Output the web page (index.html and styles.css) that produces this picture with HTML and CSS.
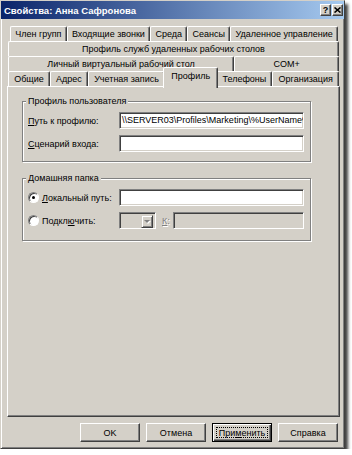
FILE: index.html
```html
<!DOCTYPE html>
<html lang="ru">
<head>
    <meta charset="UTF-8">
    <title>Свойства: Анна Сафронова</title>
    <link rel="stylesheet" href="styles.css">
</head>
<body>
    <div class="window">
        <div class="titlebar">
            <span class="title">Свойства: Анна Сафронова</span>
            <div class="caption-btns">
                <span class="cap-btn help">?</span>
                <span class="cap-btn">
                    <svg width="7" height="6" viewBox="0 0 7 6">
                        <path d="M0.5 0.5 L6.5 5.5 M6.5 0.5 L0.5 5.5" stroke="#000" stroke-width="1.6" fill="none"/>
                    </svg>
                </span>
            </div>
        </div>

        <div class="client">
            <!-- Tabs -->
            <div class="tabs">
                <div class="tab-row first">
                    <div class="tab">Член групп</div>
                    <div class="tab">Входящие звонки</div>
                    <div class="tab">Среда</div>
                    <div class="tab">Сеансы</div>
                    <div class="tab">Удаленное управление</div>
                </div>
                <div class="tab-row">
                    <div class="tab">Профиль служб удаленных рабочих столов</div>
                </div>
                <div class="tab-row">
                    <div class="tab">Личный виртуальный рабочий стол</div>
                    <div class="tab">COM+</div>
                </div>
                <div class="tab-row">
                    <div class="tab">Общие</div>
                    <div class="tab">Адрес</div>
                    <div class="tab">Учетная запись</div>
                    <div class="tab active">Профиль</div>
                    <div class="tab">Телефоны</div>
                    <div class="tab">Организация</div>
                </div>
            </div>

            <div class="panel">
                <fieldset class="group">
                    <legend>Профиль пользователя</legend>
                    <div class="rows">
                        <div class="row">
                            <span class="label"><u>П</u>уть к профилю:</span>
                            <div class="field">\\SERVER03\Profiles\Marketing\%UserName%</div>
                        </div>
                        <div class="row">
                            <span class="label"><u>С</u>ценарий входа:</span>
                            <div class="field"></div>
                        </div>
                    </div>
                </fieldset>

                <fieldset class="group home">
                    <legend>Домашняя папка</legend>
                    <div class="rows">
                        <div class="row">
                            <span class="label"><span class="radio"><span class="dot"></span></span><u>Л</u>окальный путь:</span>
                            <div class="field"></div>
                        </div>
                        <div class="row">
                            <span class="label"><span class="radio"></span>Подкл<u>ю</u>чить:</span>
                            <div class="combo disabled"><span class="combo-btn"><span class="arrow"></span></span></div>
                            <span class="drive-label"><u>К</u>:</span>
                            <div class="field disabled short"></div>
                        </div>
                    </div>
                </fieldset>
            </div>

            <div class="buttons">
                <div class="btn">OK</div>
                <div class="btn">Отмена</div>
                <div class="btn default"><span class="focus">При<u>м</u>енить</span></div>
                <div class="btn">Справка</div>
            </div>
        </div>
    </div>
</body>
</html>
```

FILE: styles.css
```css
* {
    box-sizing: border-box;
}

body {
    margin: 0;
    background: #fff;
    color: #000;
    font-family: "Liberation Sans", Arial, sans-serif;
    font-size: 9px;
}

u {
    text-decoration: underline;
    text-underline-offset: 1px;
}

.window {
    width: 345px;
    height: 449px;
    background: #d4d0c8;
    border: 1px solid;
    border-color: #d4d0c8 #404040 #404040 #d4d0c8;
    box-shadow: inset 1px 1px 0 #fff, inset -1px -1px 0 #808080, 3px 4px 3px rgba(0, 0, 0, 0.75);
    display: flex;
    flex-direction: column;
}

/* Title bar */
.titlebar {
    height: 18px;
    background: linear-gradient(to right, #0a246a, #a6caf0);
    display: flex;
    align-items: center;
    padding: 0 1px 0 3px;
}

.title {
    color: #fff;
    font-weight: bold;
    font-size: 9.5px;
}

.caption-btns {
    margin-left: auto;
    display: flex;
    gap: 1px;
}

.cap-btn {
    width: 11px;
    height: 12px;
    background: #d4d0c8;
    border: 1px solid;
    border-color: #fff #404040 #404040 #fff;
    box-shadow: inset -1px -1px 0 #808080;
    display: flex;
    align-items: center;
    justify-content: center;
    font-weight: bold;
    font-size: 9px;
    line-height: 1;
}

/* Client area */
.client {
    flex: 1;
    display: flex;
    flex-direction: column;
    padding: 7px 4px 0 6px;
}

.tab-row {
    display: flex;
    height: 15px;
    margin: 0 1px;
}

.tab-row.first {
    margin: 0 2px 0 3px;
}

.tab {
    flex: 1 1 auto;
    padding: 0 4px;
    text-align: center;
    line-height: 14px;
    white-space: nowrap;
    border: 1px solid;
    border-bottom: 0;
    border-color: #fff #404040 transparent #fff;
    border-radius: 2px 2px 0 0;
    box-shadow: inset -1px 0 0 #808080;
}

.tab.active {
    position: relative;
    z-index: 1;
    align-self: flex-start;
    height: 21px;
    margin: -4px -2px 0;
    padding: 0 6px;
    line-height: 17px;
    background: #d4d0c8;
}

.panel {
    height: 331px;
    border: 1px solid;
    border-color: #fff #404040 #404040 #fff;
    box-shadow: inset -1px -1px 0 #808080;
    padding: 8px 0 0 14px;
}

/* Group boxes */
.group {
    width: 289px;
    margin: 0;
    padding: 5px 6px 9px 5px;
    border: 1px solid #808080;
    box-shadow: inset 1px 1px 0 #fff, 1px 1px 0 #fff;
}

.group legend {
    margin-left: -2px;
    padding: 0 2px;
    line-height: 12px;
    background: #d4d0c8;
}

.group.home {
    margin-top: 10px;
    padding-bottom: 11px;
}

.rows {
    display: flex;
    flex-direction: column;
    gap: 6px;
}

.row {
    display: flex;
    align-items: center;
    height: 17px;
}

.label {
    width: 91px;
    display: flex;
    align-items: center;
    white-space: nowrap;
}

.field {
    width: 185px;
    height: 17px;
    background: #fff;
    border: 1px solid;
    border-color: #808080 #fff #fff #808080;
    box-shadow: inset 1px 1px 0 #404040, inset -1px -1px 0 #d4d0c8;
    padding: 0 2px;
    line-height: 15px;
    overflow: hidden;
    white-space: nowrap;
}

.field.disabled {
    background: #d4d0c8;
}

.field.short {
    width: 131px;
}

.radio {
    width: 11px;
    height: 11px;
    margin-right: 3px;
    border-radius: 50%;
    background: #fff;
    border: 1px solid;
    border-color: #808080 #fff #fff #808080;
    box-shadow: inset 1px 1px 0 #404040;
    display: flex;
    align-items: center;
    justify-content: center;
}

.dot {
    width: 3px;
    height: 3px;
    border-radius: 50%;
    background: #000;
}

.combo {
    width: 37px;
    height: 17px;
    border: 1px solid;
    border-color: #808080 #fff #fff #808080;
    box-shadow: inset 1px 1px 0 #404040, inset -1px -1px 0 #d4d0c8;
    background: #d4d0c8;
    display: flex;
    justify-content: flex-end;
    padding: 2px;
}

.combo-btn {
    width: 12px;
    height: 13px;
    border: 1px solid;
    border-color: #d4d0c8 #404040 #404040 #d4d0c8;
    box-shadow: inset 1px 1px 0 #fff, inset -1px -1px 0 #808080;
    display: flex;
    align-items: center;
    justify-content: center;
}

.arrow {
    width: 0;
    height: 0;
    border-left: 3px solid transparent;
    border-right: 3px solid transparent;
    border-top: 3px solid #808080;
    filter: drop-shadow(1px 1px 0 #fff);
}

.drive-label {
    width: 17px;
    padding-left: 6px;
    color: #808080;
    text-shadow: 1px 1px 0 #fff;
}

/* Dialog buttons */
.buttons {
    display: flex;
    justify-content: flex-end;
    gap: 6px;
    margin-top: 6px;
    padding-right: 2px;
}

.btn {
    width: 60px;
    height: 19px;
    border: 1px solid;
    border-color: #fff #404040 #404040 #fff;
    box-shadow: inset -1px -1px 0 #808080;
    display: flex;
    align-items: center;
    justify-content: center;
}

.btn.default {
    border-color: #000;
    box-shadow: inset 1px 1px 0 #fff, inset -1px -1px 0 #404040, inset -2px -2px 0 #808080;
    padding: 3px;
}

.focus {
    flex: 1;
    align-self: stretch;
    display: flex;
    align-items: center;
    justify-content: center;
    border: 1px dotted #000;
}
```
